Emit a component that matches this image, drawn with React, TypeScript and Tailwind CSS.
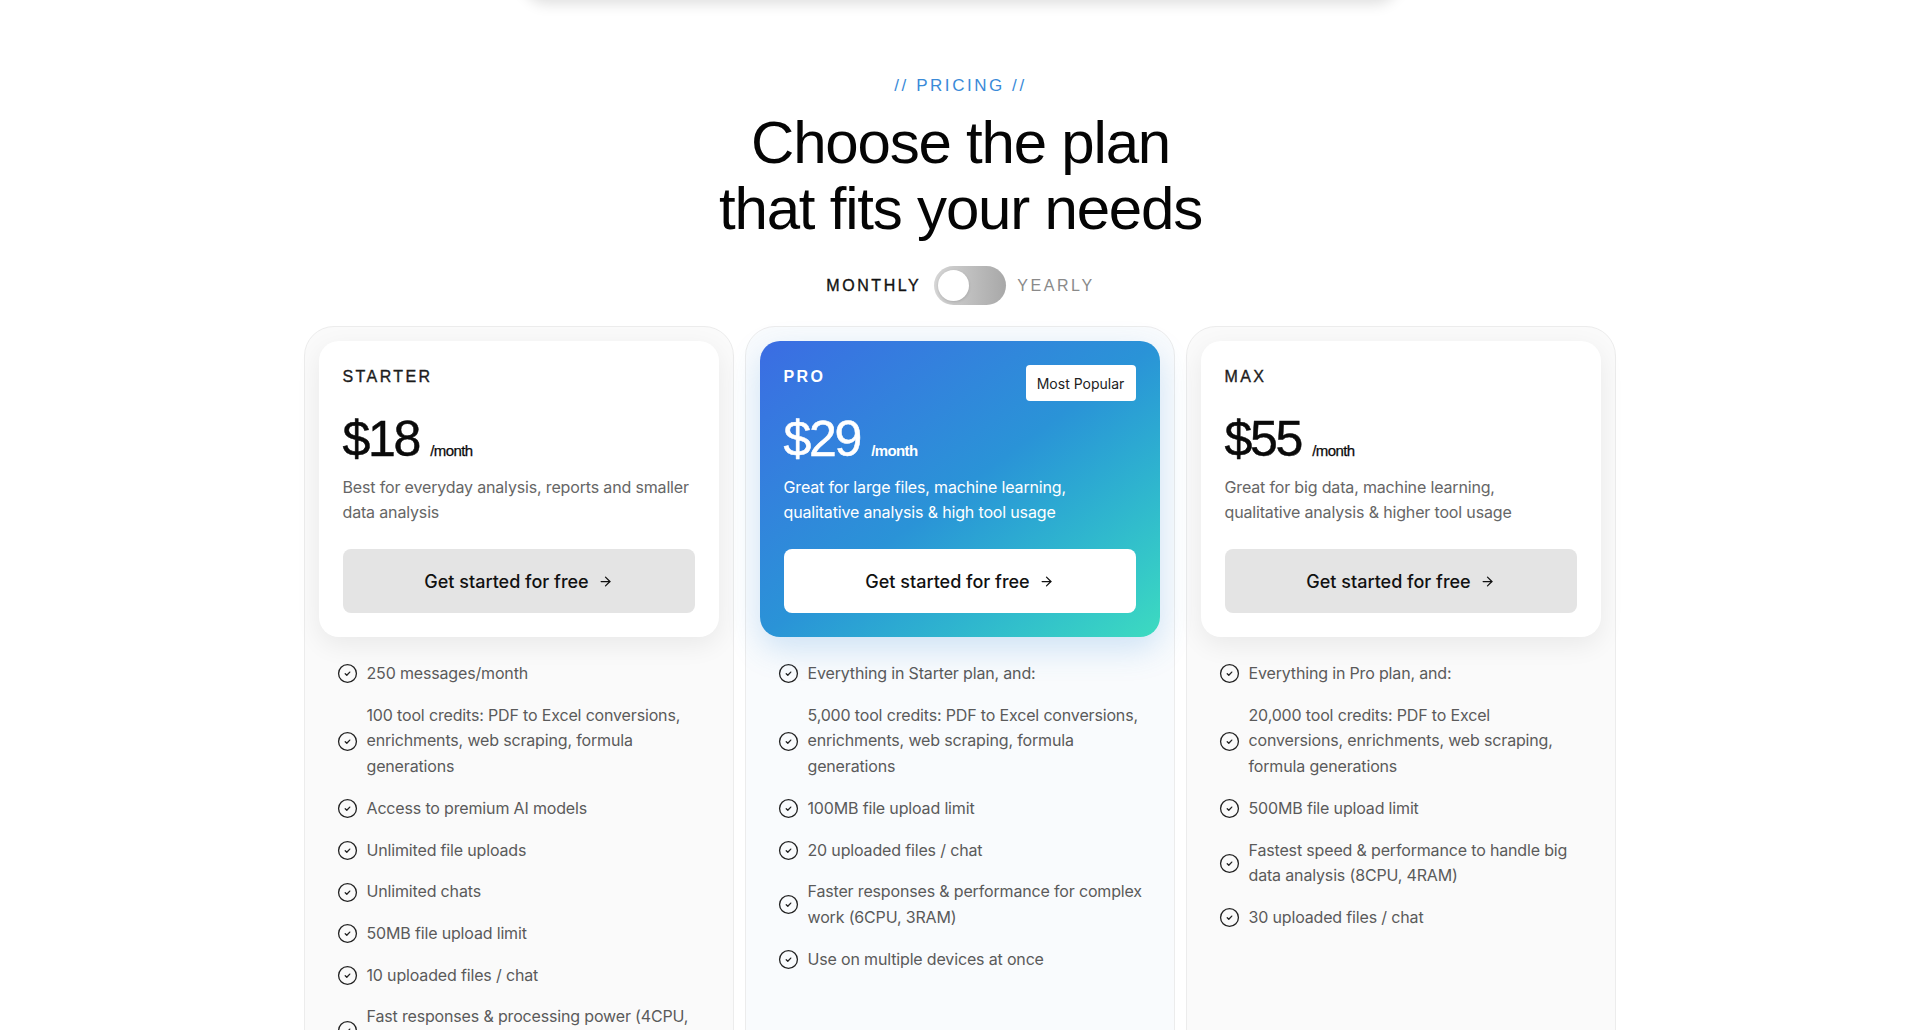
import React from "react";
import { ArrowRight } from "lucide-react";

type Plan = {
  name: string;
  price: string;
  desc: string;
  features: string[];
  featured?: boolean;
};

const plans: Plan[] = [
  {
    name: "STARTER",
    price: "$18",
    desc: "Best for everyday analysis, reports and smaller data analysis",
    features: [
      "250 messages/month",
      "100 tool credits: PDF to Excel conversions, enrichments, web scraping, formula generations",
      "Access to premium AI models",
      "Unlimited file uploads",
      "Unlimited chats",
      "50MB file upload limit",
      "10 uploaded files / chat",
      "Fast responses & processing power (4CPU, 2RAM)",
    ],
  },
  {
    name: "PRO",
    price: "$29",
    desc: "Great for large files, machine learning, qualitative analysis & high tool usage",
    featured: true,
    features: [
      "Everything in Starter plan, and:",
      "5,000 tool credits: PDF to Excel conversions, enrichments, web scraping, formula generations",
      "100MB file upload limit",
      "20 uploaded files / chat",
      "Faster responses & performance for complex work (6CPU, 3RAM)",
      "Use on multiple devices at once",
    ],
  },
  {
    name: "MAX",
    price: "$55",
    desc: "Great for big data, machine learning, qualitative analysis & higher tool usage",
    features: [
      "Everything in Pro plan, and:",
      "20,000 tool credits: PDF to Excel conversions, enrichments, web scraping, formula generations",
      "500MB file upload limit",
      "Fastest speed & performance to handle big data analysis (8CPU, 4RAM)",
      "30 uploaded files / chat",
    ],
  },
];

function CheckIcon() {
  return (
    <svg width="21" height="21" viewBox="0 0 24 24" fill="none" className="shrink-0">
      <circle cx="12" cy="12" r="10.2" stroke="#222" strokeWidth="1.5" />
      <path
        d="M9.4 12.3l1.8 1.7 3.4-3.6"
        stroke="#222"
        strokeWidth="1.5"
        strokeLinecap="round"
        strokeLinejoin="round"
      />
    </svg>
  );
}

function PlanCard({ plan }: { plan: Plan }) {
  const f = plan.featured;
  return (
    <div
      className={
        "flex flex-col rounded-[30px] border border-[#ececec] p-[14px] " +
        (f ? "bg-[#f9fbfd]" : "bg-[#fafafa]")
      }
    >
      <div
        className={
          "relative rounded-[20px] p-6 " +
          (f
            ? "bg-gradient-to-br from-[#3b6ce3] via-[#2a93d7] to-[#3ddbc0] shadow-[0_12px_32px_rgba(56,140,220,0.22)]"
            : "bg-white shadow-[0_8px_26px_rgba(0,0,0,0.07)]")
        }
      >
        <div
          className={
            "text-[16px] leading-[24px] tracking-[0.15em] font-['Liberation_Sans',Arial,sans-serif] " +
            (f ? "text-white font-bold" : "text-[#1c1c1c] [-webkit-text-stroke:0.35px_#1c1c1c]")
          }
        >
          {plan.name}
        </div>
        {f && (
          <div className="absolute right-6 top-6 flex h-[36px] w-[110px] items-center justify-center rounded-[4px] bg-white font-['Inter',sans-serif] text-[14px] text-[#222]">
            Most Popular
          </div>
        )}
        <div
          className={
            "mt-[25px] flex items-baseline gap-[11px] font-['Liberation_Sans',Arial,sans-serif] " +
            (f ? "text-white" : "text-[#0a0a0a]")
          }
        >
          <span className="text-[50px] leading-[50px] tracking-[-0.045em] [-webkit-text-stroke:0.5px_currentColor]">
            {plan.price}
          </span>
          <span className={"text-[15px] tracking-[-0.04em] " + (f ? "font-bold" : "[-webkit-text-stroke:0.25px_currentColor]")}>
            /month
          </span>
        </div>
        <p
          className={
            "mt-[11px] max-w-[348px] font-['Inter',sans-serif] text-[16px] leading-[25px] tracking-[-0.01em] " +
            (f ? "text-white" : "text-[#666]")
          }
        >
          {plan.desc}
        </p>
        <button
          className={
            "mt-[24px] flex h-[64px] w-full items-center justify-center gap-[9px] rounded-[8px] font-['Inter',sans-serif] text-[18px] font-medium text-[#111] " +
            (f ? "bg-white" : "bg-[#e4e4e4]")
          }
        >
          Get started for free
          <ArrowRight size={15} strokeWidth={2} />
        </button>
      </div>
      <ul className="mt-[24px] flex flex-col gap-[16px] pb-12 pl-[18px] pr-[14px]">
        {plan.features.map((t) => (
          <li key={t} className="flex items-center gap-[9px]">
            <CheckIcon />
            <span className="font-['Inter',sans-serif] text-[16px] leading-[25.7px] tracking-[-0.01em] text-[#5a5a5a]">
              {t}
            </span>
          </li>
        ))}
      </ul>
    </div>
  );
}

export default function App() {
  return (
    <div className="relative min-h-screen overflow-hidden bg-white">
      <div className="absolute left-1/2 top-[-60px] h-[60px] w-[876px] -translate-x-1/2 rounded-[24px] bg-white shadow-[0_4px_14px_rgba(0,0,0,0.13)]" />
      <div className="flex flex-col items-center pt-[74px]">
        <div className="font-['Liberation_Sans',Arial,sans-serif] text-[17px] leading-[24px] tracking-[0.15em] text-[#3a8ad8]">
          // PRICING //
        </div>
        <h1 className="mt-[12px] text-center font-['Liberation_Sans',Arial,sans-serif] text-[60px] leading-[66px] tracking-[-0.02em] text-[#050505]">
          Choose the plan
          <br />
          that fits your needs
        </h1>
        <div className="mt-[24px] flex items-center font-['Liberation_Sans',Arial,sans-serif] text-[16px] tracking-[0.16em]">
          <span className="text-[#111] [-webkit-text-stroke:0.35px_#111]">MONTHLY</span>
          <div className="ml-[13px] mr-[11px] flex h-[39px] w-[72px] items-center rounded-full bg-gradient-to-r from-[#d6d6d6] to-[#a8a8a8] px-[4px]">
            <div className="h-[31px] w-[31px] rounded-full bg-white shadow-[0_1px_3px_rgba(0,0,0,0.15)]" />
          </div>
          <span className="text-[#8a8a8a]">YEARLY</span>
        </div>
        <div className="mt-[21px] grid w-[1312px] -translate-x-[1px] grid-cols-3 gap-[11px]">
          {plans.map((p) => (
            <PlanCard key={p.name} plan={p} />
          ))}
        </div>
      </div>
    </div>
  );
}
